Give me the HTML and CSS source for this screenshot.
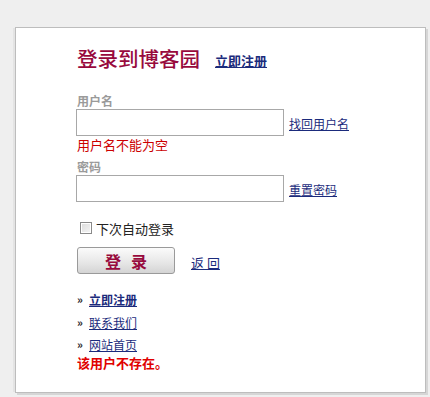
FILE: index.html
```html
<!DOCTYPE html>
<html lang="zh-CN">
<head>
<meta charset="utf-8">
<title>登录到博客园</title>
<link rel="stylesheet" href="styles.css">
</head>
<body>
<div class="panel">
  <div class="title-row">
    <h1 class="title">登录到博客园</h1>
    <a class="reg-link" href="#">立即注册</a>
  </div>
  <div class="label label-user">用户名</div>
  <div class="field-row">
    <input class="text-input" type="text">
    <a class="side-link" href="#">找回用户名</a>
  </div>
  <div class="error">用户名不能为空</div>
  <div class="label label-pwd">密码</div>
  <div class="field-row">
    <input class="text-input" type="password">
    <a class="side-link" href="#">重置密码</a>
  </div>
  <label class="remember">
    <input class="check" type="checkbox">
    <span>下次自动登录</span>
  </label>
  <div class="button-row">
    <button class="login-btn" type="button"><span>登</span><span>录</span></button>
    <a class="back-link" href="#">返&nbsp;回</a>
  </div>
  <ul class="links">
    <li class="item item-first"><span class="raquo">»</span><a class="strong" href="#">立即注册</a></li>
    <li class="item"><span class="raquo">»</span><a href="#">联系我们</a></li>
    <li class="item"><span class="raquo">»</span><a href="#">网站首页</a></li>
  </ul>
  <div class="msg">该用户不存在。</div>
</div>
</body>
</html>
```

FILE: styles.css
```css
html, body {
  margin: 0;
  padding: 0;
}
body {
  background: #efefef;
  font-family: "Noto Sans CJK SC", "Liberation Sans", sans-serif;
  font-size: 12px;
  color: #333;
  height: 397px;
  overflow: hidden;
}
a {
  color: #1b2b7c;
  text-decoration: underline;
}
.panel {
  margin: 27px 0 0 15px;
  background: #fff;
  border: 1px solid #bdbdbd;
  box-shadow: 2px 2px 0 #d6d6d6, -3px 0 0 -1px #e4e4e4;
  padding: 18px 0 0 61px;
  box-sizing: border-box;
  width: 411px;
  height: 366px;
}
.title-row {
  display: flex;
  align-items: center;
  height: 24px;
}
.title {
  margin: 0;
  font-size: 20.5px;
  font-weight: 500;
  line-height: 24px;
  color: #980a3d;
}
.reg-link {
  margin-left: 15px;
  margin-top: 6px;
  font-size: 13px;
  font-weight: bold;
  line-height: 14px;
}
.label {
  font-size: 12px;
  font-weight: bold;
  color: #9a9a9a;
  line-height: 14px;
}
.label-user {
  margin-top: 24px;
}
.label-pwd {
  margin-top: 8px;
}
.field-row {
  display: flex;
  align-items: center;
  margin-top: 1px;
  margin-left: -1px;
}
.text-input {
  width: 208px;
  height: 27px;
  box-sizing: border-box;
  border: 1px solid #a8a8a8;
  margin: 0;
  padding: 0 3px;
  background: #fff;
}
.side-link {
  margin-left: 5px;
  padding-top: 3px;
  font-size: 12px;
  line-height: 14px;
}
.error {
  margin-top: 2px;
  color: #cc0000;
  font-size: 13px;
  line-height: 14px;
}
.remember {
  display: flex;
  align-items: center;
  height: 16px;
  margin-top: 18px;
  font-size: 13px;
  color: #222;
}
.check {
  appearance: none;
  -webkit-appearance: none;
  width: 12px;
  height: 12px;
  margin: 0 4px 0 3px;
  border: 1px solid #8a8a8a;
  background: linear-gradient(135deg, #dcdcdc, #f6f6f6);
  box-shadow: inset 0 0 0 1px #fff;
}
.button-row {
  display: flex;
  align-items: center;
  margin-top: 11px;
}
.login-btn {
  width: 98px;
  height: 27px;
  margin: 0;
  padding: 0;
  border: 1px solid #9a9a9a;
  border-radius: 3px;
  background: linear-gradient(#fbfbfb, #e6e6e6 60%, #d4d4d4);
  display: flex;
  align-items: center;
  justify-content: center;
  gap: 10px;
  font-family: "Noto Sans CJK SC", sans-serif;
  font-size: 16px;
  font-weight: bold;
  color: #980a3d;
  line-height: 20px;
}
.back-link {
  margin-left: 16px;
  margin-top: 4px;
  font-size: 13px;
  line-height: 14px;
}
.links {
  list-style: none;
  margin: 15px 0 0;
  padding: 0;
}
.item {
  display: flex;
  align-items: center;
  height: 20px;
  font-size: 12px;
}
.item + .item {
  margin-top: 3px;
}
.item:last-child {
  margin-top: 2px;
}
.raquo {
  width: 12px;
  font-size: 11px;
  font-weight: bold;
  color: #222;
}
.strong {
  font-weight: bold;
}
.msg {
  margin-top: 1px;
  font-size: 13px;
  font-weight: bold;
  line-height: 16px;
  color: #e00000;
}
```
